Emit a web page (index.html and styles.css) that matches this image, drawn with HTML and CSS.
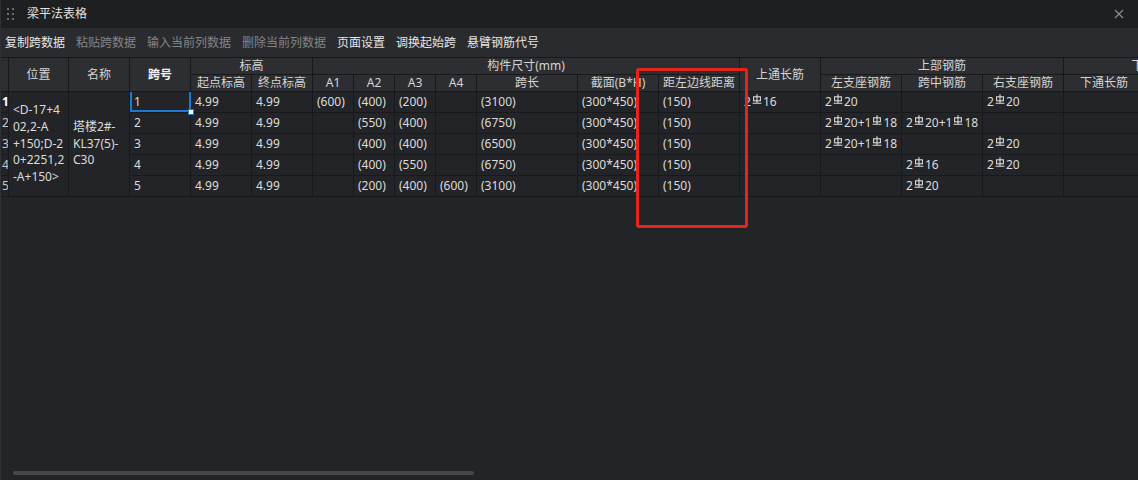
FILE: index.html
```html
<!DOCTYPE html>
<html lang="zh-CN">
<head>
    <meta charset="UTF-8">
    <title>梁平法表格</title>
    <link rel="stylesheet" href="styles.css">
</head>
<body>
    <svg class="defs" width="0" height="0">
        <symbol id="hrb" viewBox="0 0 10 10">
            <path d="M5 0.3V9M0.6 9.3H9.4" fill="none" stroke="currentColor" stroke-width="1.1"/>
            <rect x="1.6" y="2.8" width="6.8" height="4" fill="none" stroke="currentColor" stroke-width="1.1"/>
        </symbol>
    </svg>

    <div class="window">
        <div class="titlebar">
            <div class="grip"><i></i><i></i><i></i><i></i><i></i><i></i></div>
            <span class="title">梁平法表格</span>
            <svg class="close" width="10" height="10" viewBox="0 0 10 10">
                <path d="M1 1L9 9M9 1L1 9" stroke="#8c8c8c" stroke-width="1.2"/>
            </svg>
        </div>

        <div class="toolbar">
            <span class="tool">复制跨数据</span>
            <span class="tool off">粘贴跨数据</span>
            <span class="tool off">输入当前列数据</span>
            <span class="tool off">删除当前列数据</span>
            <span class="tool">页面设置</span>
            <span class="tool">调换起始跨</span>
            <span class="tool">悬臂钢筋代号</span>
        </div>

        <div class="grid-wrap">
            <table class="grid">
                <colgroup>
                    <col class="w-rn">
                    <col class="w60">
                    <col class="w61"><col class="w61"><col class="w61"><col class="w61">
                    <col class="w41"><col class="w41"><col class="w41"><col class="w41">
                    <col class="w101">
                    <col class="w81"><col class="w81"><col class="w81"><col class="w81"><col class="w81"><col class="w81"><col class="w81">
                    <col class="w103">
                </colgroup>
                <thead>
                    <tr class="top">
                        <th class="rn" rowspan="2"></th>
                        <th rowspan="2">位置</th>
                        <th rowspan="2">名称</th>
                        <th rowspan="2" class="key">跨号</th>
                        <th colspan="2">标高</th>
                        <th colspan="7">构件尺寸(mm)</th>
                        <th rowspan="2">上通长筋</th>
                        <th colspan="3">上部钢筋</th>
                        <th colspan="2">下部钢筋</th>
                    </tr>
                    <tr>
                        <th>起点标高</th>
                        <th>终点标高</th>
                        <th>A1</th>
                        <th>A2</th>
                        <th>A3</th>
                        <th>A4</th>
                        <th>跨长</th>
                        <th>截面(B*H)</th>
                        <th>距左边线距离</th>
                        <th>左支座钢筋</th>
                        <th>跨中钢筋</th>
                        <th>右支座钢筋</th>
                        <th>下通长筋</th>
                        <th>下部钢筋</th>
                    </tr>
                </thead>
                <tbody>
                    <tr>
                        <td class="rn cur">1</td>
                        <td rowspan="5" class="multi">&lt;D-17+4<br>02,2-A<br>+150;D-2<br>0+2251,2<br>-A+150&gt;</td>
                        <td rowspan="5" class="multi">塔楼2#-<br>KL37(5)-<br>C30</td>
                        <td class="sel">1<span class="handle"></span></td>
                        <td>4.99</td><td>4.99</td>
                        <td>(600)</td><td>(400)</td><td>(200)</td><td></td>
                        <td>(3100)</td><td>(300*450)</td><td>(150)</td>
                        <td>2<svg class="gj"><use href="#hrb"/></svg>16</td>
                        <td>2<svg class="gj"><use href="#hrb"/></svg>20</td>
                        <td></td>
                        <td>2<svg class="gj"><use href="#hrb"/></svg>20</td>
                        <td></td><td></td>
                    </tr>
                    <tr>
                        <td class="rn">2</td>
                        <td>2</td>
                        <td>4.99</td><td>4.99</td>
                        <td></td><td>(550)</td><td>(400)</td><td></td>
                        <td>(6750)</td><td>(300*450)</td><td>(150)</td>
                        <td></td>
                        <td>2<svg class="gj"><use href="#hrb"/></svg>20+1<svg class="gj"><use href="#hrb"/></svg>18</td>
                        <td>2<svg class="gj"><use href="#hrb"/></svg>20+1<svg class="gj"><use href="#hrb"/></svg>18</td>
                        <td></td>
                        <td></td><td></td>
                    </tr>
                    <tr>
                        <td class="rn">3</td>
                        <td>3</td>
                        <td>4.99</td><td>4.99</td>
                        <td></td><td>(400)</td><td>(400)</td><td></td>
                        <td>(6500)</td><td>(300*450)</td><td>(150)</td>
                        <td></td>
                        <td>2<svg class="gj"><use href="#hrb"/></svg>20+1<svg class="gj"><use href="#hrb"/></svg>18</td>
                        <td></td>
                        <td>2<svg class="gj"><use href="#hrb"/></svg>20</td>
                        <td></td><td></td>
                    </tr>
                    <tr>
                        <td class="rn">4</td>
                        <td>4</td>
                        <td>4.99</td><td>4.99</td>
                        <td></td><td>(400)</td><td>(550)</td><td></td>
                        <td>(6750)</td><td>(300*450)</td><td>(150)</td>
                        <td></td>
                        <td></td>
                        <td>2<svg class="gj"><use href="#hrb"/></svg>16</td>
                        <td>2<svg class="gj"><use href="#hrb"/></svg>20</td>
                        <td></td><td></td>
                    </tr>
                    <tr>
                        <td class="rn">5</td>
                        <td>5</td>
                        <td>4.99</td><td>4.99</td>
                        <td></td><td>(200)</td><td>(400)</td><td>(600)</td>
                        <td>(3100)</td><td>(300*450)</td><td>(150)</td>
                        <td></td>
                        <td></td>
                        <td>2<svg class="gj"><use href="#hrb"/></svg>20</td>
                        <td></td>
                        <td></td><td></td>
                    </tr>
                </tbody>
            </table>

            <div class="mark"></div>
            <div class="hscroll"></div>
        </div>
    </div>
</body>
</html>
```

FILE: styles.css
```css
* {
    box-sizing: border-box;
}

html, body {
    margin: 0;
    padding: 0;
}

body {
    width: 1138px;
    height: 480px;
    overflow: hidden;
    background-color: #232427;
    font-family: "Noto Sans", "Noto Sans CJK SC", sans-serif;
    font-size: 12px;
    color: #dcdcdc;
}

.defs {
    position: absolute;
}

.window {
    display: flex;
    flex-direction: column;
    height: 480px;
    border-left: 1px solid #2f3033;
}

/* title bar */
.titlebar {
    height: 28px;
    display: flex;
    align-items: center;
    background-color: #1e1f21;
    padding-left: 6px;
}

.grip {
    display: grid;
    grid-template-columns: 2px 2px;
    column-gap: 3px;
    row-gap: 3px;
    width: 7px;
}

.grip i {
    width: 2px;
    height: 2px;
    background-color: #6b6c6e;
}

.title {
    margin-left: 13px;
    color: #e2e2e2;
    line-height: 16px;
}

.close {
    margin-left: auto;
    margin-right: 14px;
}

/* toolbar */
.toolbar {
    height: 29px;
    display: flex;
    align-items: center;
    gap: 11px;
    padding-left: 4px;
    background-color: #2a2b2e;
}

.tool {
    color: #e6e6e6;
    line-height: 16px;
}

.tool.off {
    color: #838486;
}

/* grid */
.grid-wrap {
    position: relative;
    flex: 1;
    overflow: hidden;
    background-color: #232427;
}

.grid {
    width: 1247px;
    table-layout: fixed;
    border-collapse: separate;
    border-spacing: 0;
}

.w-rn { width: 8px; }
.w60 { width: 60px; }
.w61 { width: 61px; }
.w41 { width: 41px; }
.w101 { width: 101px; }
.w81 { width: 81px; }
.w103 { width: 103px; }

.grid th,
.grid td {
    padding: 0 4px;
    border-right: 1px solid #18191b;
    border-bottom: 1px solid #18191b;
    white-space: nowrap;
    overflow: hidden;
    font-size: 12px;
}

.grid th {
    height: 17px;
    line-height: 16px;
    font-weight: normal;
    text-align: center;
    color: #d4d4d4;
    background-color: #2d2e31;
}

.grid tr.top th {
    height: 18px;
    border-top: 1px solid #18191b;
}

.grid th.key {
    font-weight: bold;
    color: #f2f2f2;
}

.grid td {
    height: 21px;
    line-height: 20px;
    text-align: left;
    background-color: #232427;
}

.grid .rn {
    padding: 0 0 0 1px;
}

.grid td.rn {
    color: #c8c8c8;
}

.grid td.cur {
    font-weight: bold;
    color: #ffffff;
}

.grid td.multi {
    line-height: 16.8px;
    white-space: normal;
    vertical-align: middle;
    padding-left: 4px;
}

.gj {
    width: 10px;
    height: 10px;
    margin: 0 1px;
    vertical-align: 2px;
    color: #dcdcdc;
}

/* selected cell */
.grid td.sel {
    position: relative;
    overflow: visible;
}

.grid td.sel::after {
    content: "";
    position: absolute;
    left: 0;
    top: 0;
    right: -1px;
    bottom: 0;
    border: 2px solid #1d7ad0;
    border-top: none;
}

.handle {
    position: absolute;
    right: -4px;
    bottom: -3px;
    width: 6px;
    height: 6px;
    background-color: #ffffff;
    border: 1px solid #1d7ad0;
    z-index: 2;
}

/* red annotation box */
.mark {
    position: absolute;
    left: 635px;
    top: 11px;
    width: 112px;
    height: 160px;
    border: 3px solid #e8231c;
    border-radius: 3px;
}

.hscroll {
    position: absolute;
    left: 12px;
    bottom: 5px;
    width: 461px;
    height: 4px;
    border-radius: 2px;
    background-color: #48494c;
}
```
